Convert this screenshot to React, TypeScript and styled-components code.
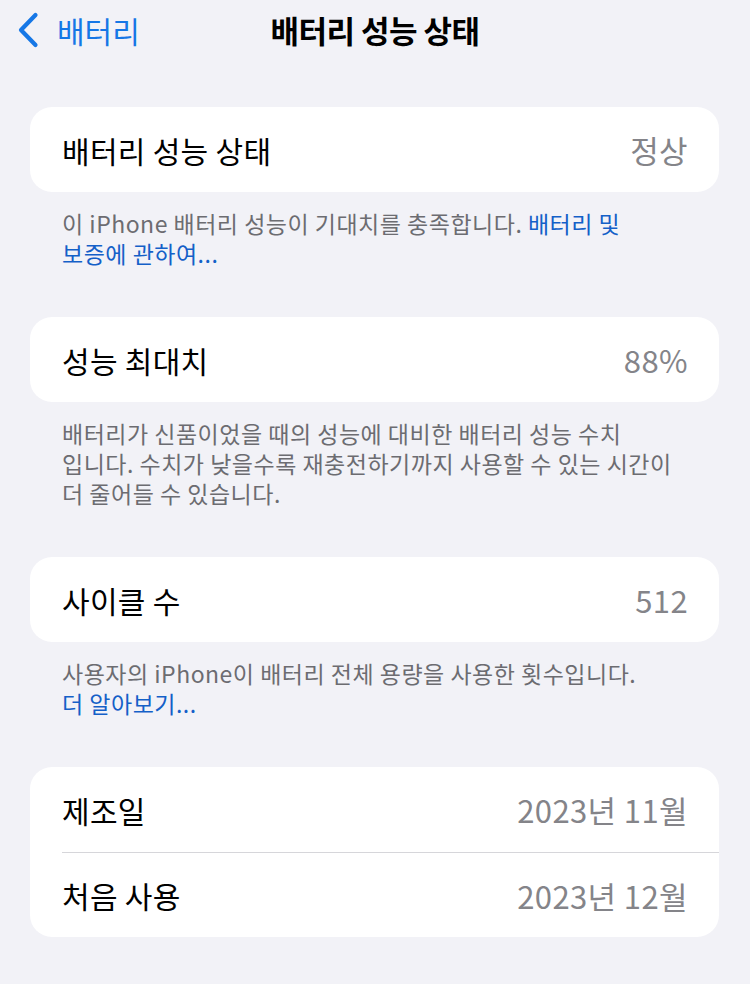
import React from 'react'
import styled, { createGlobalStyle } from 'styled-components'

const GlobalStyle = createGlobalStyle`
    html, body {
        margin: 0;
        padding: 0;
        background-color: #f2f2f7;
    }
    body {
        font-family: "Noto Sans CJK KR", "Noto Sans", sans-serif;
        -webkit-font-smoothing: antialiased;
    }
`

const Page = styled.div`
    width: 750px;
    min-height: 984px;
    background-color: #f2f2f7;
    overflow: hidden;
`

const NavBar = styled.div`
    height: 62px;
    display: grid;
    grid-template-columns: 1fr auto 1fr;
    align-items: center;
`

const BackButton = styled.a`
    display: flex;
    align-items: center;
    gap: 18px;
    padding-left: 17px;
    margin-top: -3px;
    color: #1677e6;
    font-size: 30px;
    text-decoration: none;
    cursor: pointer;
`

const NavTitle = styled.h1`
    margin: -3px 0 0;
    font-size: 31px;
    font-weight: 700;
    color: #000000;
    letter-spacing: -0.5px;
`

const Content = styled.div`
    padding: 45px 31px 0 30px;
`

const Section = styled.section`
    margin-bottom: 49px;
`

const Card = styled.div`
    background-color: #ffffff;
    border-radius: 22px;
    overflow: hidden;
`

const Row = styled.div<{ divider?: boolean }>`
    height: 85px;
    margin-left: 32px;
    padding-right: 31px;
    display: flex;
    align-items: center;
    justify-content: space-between;
    box-sizing: border-box;
    border-top: ${({ divider }) => (divider ? '1px solid #d6d6da' : 'none')};
`

const Label = styled.span`
    font-size: 30px;
    color: #000000;
    letter-spacing: 0.3px;
`

const Value = styled.span`
    font-size: 31px;
    color: #848489;
    letter-spacing: 0.4px;
`

const Footer = styled.p`
    margin: 0;
    padding: 16px 10px 0 32px;
    font-size: 23px;
    line-height: 30px;
    color: #6c6c71;
    letter-spacing: 0.5px;
    white-space: nowrap;
`

const FooterLink = styled.a`
    color: #1460c8;
    text-decoration: none;
    cursor: pointer;
`

const BackChevron = () => (
    <svg width="22" height="36" viewBox="0 0 22 36" fill="none">
        <path
            d="M18.5 3 L4 18 L18.5 33"
            stroke="#1677e6"
            strokeWidth="4.2"
            strokeLinecap="round"
            strokeLinejoin="round"
        />
    </svg>
)

const App: React.FunctionComponent = () => {
    return (
        <>
            <GlobalStyle />
            <Page>
                <NavBar>
                    <BackButton>
                        <BackChevron />
                        배터리
                    </BackButton>
                    <NavTitle>배터리 성능 상태</NavTitle>
                    <div />
                </NavBar>

                <Content>
                    <Section>
                        <Card>
                            <Row>
                                <Label>배터리 성능 상태</Label>
                                <Value>정상</Value>
                            </Row>
                        </Card>
                        <Footer>
                            이 iPhone 배터리 성능이 기대치를 충족합니다. <FooterLink>배터리 및</FooterLink>
                            <br />
                            <FooterLink>보증에 관하여...</FooterLink>
                        </Footer>
                    </Section>

                    <Section>
                        <Card>
                            <Row>
                                <Label>성능 최대치</Label>
                                <Value>88%</Value>
                            </Row>
                        </Card>
                        <Footer>
                            배터리가 신품이었을 때의 성능에 대비한 배터리 성능 수치
                            <br />
                            입니다. 수치가 낮을수록 재충전하기까지 사용할 수 있는 시간이
                            <br />
                            더 줄어들 수 있습니다.
                        </Footer>
                    </Section>

                    <Section>
                        <Card>
                            <Row>
                                <Label>사이클 수</Label>
                                <Value>512</Value>
                            </Row>
                        </Card>
                        <Footer>
                            사용자의 iPhone이 배터리 전체 용량을 사용한 횟수입니다.
                            <br />
                            <FooterLink>더 알아보기...</FooterLink>
                        </Footer>
                    </Section>

                    <Section>
                        <Card>
                            <Row>
                                <Label>제조일</Label>
                                <Value>2023년 11월</Value>
                            </Row>
                            <Row divider>
                                <Label>처음 사용</Label>
                                <Value>2023년 12월</Value>
                            </Row>
                        </Card>
                    </Section>
                </Content>
            </Page>
        </>
    )
}

export default App
